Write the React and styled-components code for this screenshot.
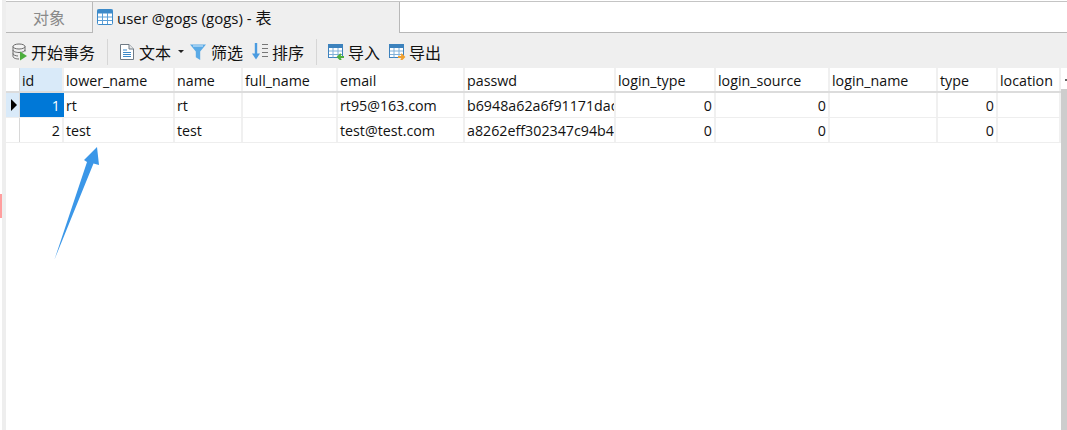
import * as React from 'react';
import styled, { createGlobalStyle } from 'styled-components';

const GlobalStyle = createGlobalStyle`
  html, body {
    margin: 0;
    padding: 0;
    background: #fff;
  }
`;

const LATIN = `"Open Sans", "Noto Sans CJK SC", sans-serif`;
const CJK = `"Noto Sans CJK SC", "Noto Sans", sans-serif`;

const Page = styled.div`
  position: relative;
  display: flex;
  width: 1067px;
  height: 430px;
  overflow: hidden;
  background: #fff;
  font-family: ${LATIN};
  color: #111;
`;

const EdgeStrip = styled.div`
  width: 2px;
  padding-top: 194px;
  box-sizing: border-box;
`;

const EdgeMark = styled.div`
  height: 24px;
  background: #ff9e9e;
`;

const Gutter = styled.div`
  width: 4px;
  background: #eeeeee;
`;

const Main = styled.div`
  flex: 1;
  display: flex;
  flex-direction: column;
  min-width: 0;
`;

const TabBar = styled.div`
  display: flex;
  height: 32px;
  margin-top: 1px;
  box-sizing: border-box;
  border-top: 1px solid #c4c4c4;
`;

const Tab = styled.div`
  display: flex;
  align-items: center;
  box-sizing: border-box;
  background: ${(p) => (p.$active ? '#efefef' : '#f2f2f2')};
  width: ${(p) => p.$width}px;
  color: ${(p) => (p.$active ? '#111' : '#8a8a8a')};
  border-right: 1px solid #b8b8b8;
  border-bottom: ${(p) => (p.$active ? 'none' : '1px solid #b8b8b8')};
  padding-left: ${(p) => p.$pad}px;
  padding-bottom: 1px;
  gap: 4px;
  font-size: 15px;
  white-space: nowrap;
`;

const TabRest = styled.div`
  flex: 1;
  border-bottom: 1px solid #b8b8b8;
  background: #fff;
`;

const Cjk = styled.span`
  font-family: ${CJK};
  font-size: 16px;
`;

const Toolbar = styled.div`
  display: flex;
  align-items: center;
  height: 35px;
  box-sizing: border-box;
  background: #efefef;
  padding: 2px 0 0 6px;
`;

const ToolButton = styled.div`
  display: flex;
  align-items: center;
  gap: ${(p) => p.$gap ?? 4}px;
  margin-right: ${(p) => p.$after ?? 0}px;
  font-family: ${CJK};
  font-size: 16px;
  color: #111;
`;

const Divider = styled.div`
  width: 1px;
  height: 26px;
  background: #d6d6d6;
  margin: 0 ${(p) => p.$right ?? 12}px 0 12px;
`;

const Caret = styled.span`
  width: 0;
  height: 0;
  margin-left: 2px;
  border-left: 3px solid transparent;
  border-right: 3px solid transparent;
  border-top: 3px solid #222;
`;

const GridArea = styled.div`
  flex: 1;
  display: flex;
  min-height: 0;
`;

const Table = styled.div`
  flex: 1;
`;

const COLUMNS = '14px 44px 111px 68px 95px 127px 151px 100px 114px 108px 60px 63px';

const HeadRow = styled.div`
  display: grid;
  grid-template-columns: ${COLUMNS};
  height: 25px;
  box-sizing: border-box;
  border-bottom: 2px solid #dcdcdc;
`;

const Row = styled.div`
  display: grid;
  grid-template-columns: ${COLUMNS};
  height: 25px;
  box-sizing: border-box;
  border-bottom: 1px solid #eeeeee;
`;

const HeadCell = styled.div`
  display: flex;
  align-items: center;
  box-sizing: border-box;
  padding: 2px 0 0 2px;
  font-size: 14.25px;
  background: ${(p) => (p.$focus ? '#d9eaf9' : '#fff')};
  border-right: 2px solid #f0f0f0;
  white-space: nowrap;
  overflow: hidden;
`;

const Cell = styled.div`
  display: flex;
  align-items: center;
  justify-content: ${(p) => (p.$num ? 'flex-end' : 'flex-start')};
  box-sizing: border-box;
  padding: 0 2px;
  font-size: 14.25px;
  color: ${(p) => (p.$selected ? '#fff' : '#111')};
  background: ${(p) => (p.$selected ? '#0078d7' : '#fff')};
  border-right: 2px solid ${(p) => (p.$selected ? '#0078d7' : '#f0f0f0')};
  white-space: nowrap;
  overflow: hidden;
`;

const RowHead = styled.div`
  display: flex;
  align-items: center;
  justify-content: center;
  box-sizing: border-box;
  background: ${(p) => (p.$current ? '#d9eaf9' : '#fff')};
  border-right: 1px solid #d8d8d8;
`;

const Pointer = styled.span`
  width: 0;
  height: 0;
  margin-left: 3px;
  border-top: 6px solid transparent;
  border-bottom: 6px solid transparent;
  border-left: 6px solid #000;
`;

const Scrollbar = styled.div`
  width: 6px;
  display: flex;
  flex-direction: column;
`;

const ScrollTop = styled.div`
  height: 21px;
  position: relative;
  &::after {
    content: '';
    position: absolute;
    right: 0;
    top: 11px;
    width: 2px;
    height: 2px;
    background: #666;
  }
`;

const ScrollThumb = styled.div`
  flex: 1;
  background: #cdcdcd;
`;

const Annotation = styled.svg`
  position: absolute;
  left: 0;
  top: 0;
  pointer-events: none;
`;

const TableIcon = () => (
  <svg width="16" height="16" viewBox="0 0 16 16">
    <rect x="0.5" y="0.5" width="15" height="15" rx="1" fill="#fff" stroke="#3d8ac9" />
    <rect x="0.5" y="0.5" width="15" height="4" fill="#3d8ac9" />
    <path d="M5.5 4v11M10.5 4v11M1 8h14M1 11.5h14" stroke="#5c9fd6" strokeWidth="1" />
  </svg>
);

const TransactionIcon = () => (
  <svg width="15" height="18" viewBox="0 0 15 18">
    <ellipse cx="7" cy="3.5" rx="6" ry="2.5" fill="#f4f4f4" stroke="#6a6a6a" />
    <path d="M1 3.5v10c0 1.4 2.7 2.5 6 2.5M13 3.5v5M1 7c0 1.4 2.7 2.5 6 2.5s6-1.1 6-2.5M1 10.5c0 1.4 2.7 2.5 5 2.5" fill="none" stroke="#6a6a6a" />
    <path d="M8 8.5l7 4.5L8 17.5z" fill="#4cae3c" />
  </svg>
);

const DocIcon = () => (
  <svg width="14" height="16" viewBox="0 0 14 16">
    <path d="M0.5 0.5h8.5l4.5 4.5v10.5h-13z" fill="#fff" stroke="#6f7a85" />
    <path d="M9 0.5v4.5h4.5" fill="#e6e6e6" stroke="#6f7a85" />
    <path d="M3 6h4M3 8.5h8M3 10.5h8M3 12.5h8" stroke="#3d8ac9" />
  </svg>
);

const FilterIcon = () => (
  <svg width="16" height="16" viewBox="0 0 16 16">
    <path d="M0 0.5h16l-5.8 7v8.5l-4.4-2.8v-5.7z" fill="#5aaae6" />
    <path d="M3 2h10" stroke="#b7dbf5" strokeWidth="1.4" />
  </svg>
);

const SortIcon = () => (
  <svg width="16" height="18" viewBox="0 0 16 18">
    <path d="M4 0v12" stroke="#4a9be0" strokeWidth="2.4" />
    <path d="M0 10.5h8l-4 6z" fill="#4a9be0" />
    <path d="M10 1.5h6M10 5.5h6M10 9.5h6M10 13.5h6" stroke="#777" strokeWidth="1" />
  </svg>
);

const GridActionIcon = ({ arrow, color }) => (
  <svg width="17" height="16" viewBox="0 0 17 16">
    <rect x="0.5" y="0.5" width="14" height="13" fill="#fff" stroke="#3d82bd" />
    <rect x="0.5" y="0.5" width="14" height="3.5" fill="#3d82bd" />
    <path d="M5 4v9.5M10 4v9.5M1 7h13M1 10.5h13" stroke="#7fb0d9" />
    <path d={arrow} fill="none" stroke={color} strokeWidth="2" />
  </svg>
);

const columns = [
  { name: 'id', focus: true },
  { name: 'lower_name' },
  { name: 'name' },
  { name: 'full_name' },
  { name: 'email' },
  { name: 'passwd' },
  { name: 'login_type' },
  { name: 'login_source' },
  { name: 'login_name' },
  { name: 'type' },
  { name: 'location' },
];

const rows = [
  ['1', 'rt', 'rt', '', 'rt95@163.com', 'b6948a62a6f91171dac4', '0', '0', '', '0', ''],
  ['2', 'test', 'test', '', 'test@test.com', 'a8262eff302347c94b43', '0', '0', '', '0', ''],
];

const numeric = [true, false, false, false, false, false, true, true, false, true, false];

const App = () => {
  return (
    <Page>
      <GlobalStyle />
      <EdgeStrip>
        <EdgeMark />
      </EdgeStrip>
      <Gutter />
      <Main>
        <TabBar>
          <Tab $width={87} $pad={27}>
            <Cjk>对象</Cjk>
          </Tab>
          <Tab $active $width={307} $pad={4}>
            <TableIcon />
            <span>
              user @gogs (gogs) - <Cjk>表</Cjk>
            </span>
          </Tab>
          <TabRest />
        </TabBar>
        <Toolbar>
          <ToolButton>
            <TransactionIcon />
            开始事务
          </ToolButton>
          <Divider />
          <ToolButton $gap={5} $after={6}>
            <DocIcon />
            <span>文本</span>
            <Caret />
          </ToolButton>
          <ToolButton $gap={5} $after={9}>
            <FilterIcon />
            筛选
          </ToolButton>
          <ToolButton>
            <SortIcon />
            排序
          </ToolButton>
          <Divider $right={11} />
          <ToolButton $gap={3} $after={9}>
            <GridActionIcon arrow="M16 13h-5.5M13 10l-3 3 3 3" color="#4fae3c" />
            导入
          </ToolButton>
          <ToolButton $gap={3}>
            <GridActionIcon arrow="M9 13h5.5M12 10l3 3-3 3" color="#f0a030" />
            导出
          </ToolButton>
        </Toolbar>
        <GridArea>
          <Table>
            <HeadRow>
              <RowHead />
              {columns.map((col) => (
                <HeadCell key={col.name} $focus={col.focus}>
                  {col.name}
                </HeadCell>
              ))}
            </HeadRow>
            {rows.map((row, r) => (
              <Row key={row[0]}>
                <RowHead $current={r === 0}>{r === 0 && <Pointer />}</RowHead>
                {row.map((value, c) => (
                  <Cell key={c} $num={numeric[c]} $selected={r === 0 && c === 0}>
                    {value}
                  </Cell>
                ))}
              </Row>
            ))}
          </Table>
          <Scrollbar>
            <ScrollTop />
            <ScrollThumb />
          </Scrollbar>
        </GridArea>
      </Main>
      <Annotation width="1067" height="430" viewBox="0 0 1067 430">
        <path d="M97 147L99 165L93.500 163.500L54.500 259.500L87 162L84 160Z" fill="#3b97e8" />
      </Annotation>
    </Page>
  );
};

export default App;
